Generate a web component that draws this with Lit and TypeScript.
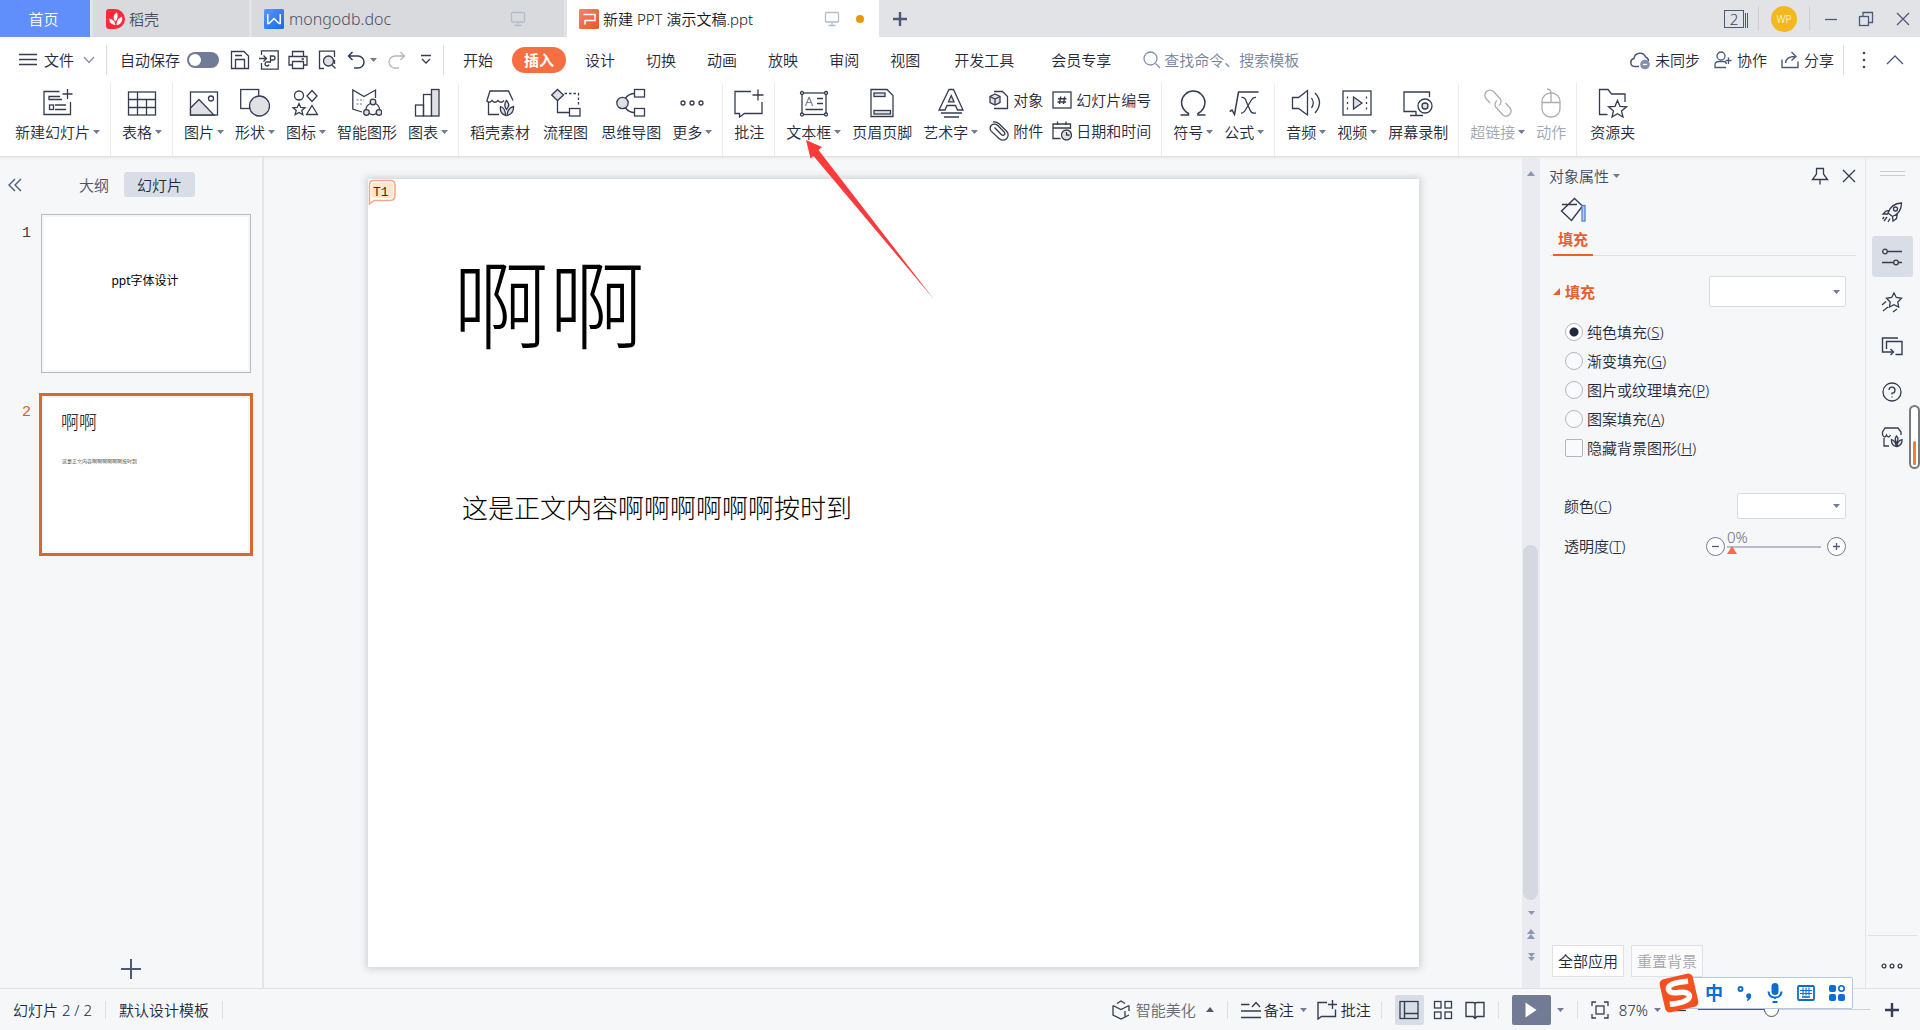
import { LitElement, html, svg, css, nothing } from 'lit';
import type { SVGTemplateResult } from 'lit';
import { customElement } from 'lit/decorators.js';

/* ---------- icon drawings ---------- */

type Drawing = { w: number; h: number; body: SVGTemplateResult };

const DRAWINGS: Record<string, Drawing> = {
  // tab logos
  docer: { w: 20, h: 20, body: svg`<path d="M0 3Q0 0 3 0H9A10 10 0 0 1 9 20H3Q0 20 0 17Z" fill="#fa2a38" stroke="none"/><g fill="#fff" stroke="none"><path d="M9.500 16C5 15.500 3 13 3.400 9.500C7 10.500 9 12.500 9.500 16Z"/><path d="M9.200 12.500C6.500 9 7.500 5.500 10.800 3.200C12.500 7 11.800 10 9.200 12.500Z"/><path d="M10.600 16.200C10.300 12 12.500 9 16 7.500C17 12 15 15.500 10.600 16.200Z"/></g>` },
  writer: { w: 20, h: 20, body: svg`<defs><linearGradient id="wg" x1="0" y1="0" x2="1" y2="1"><stop offset="0" stop-color="#5b97fb"/><stop offset="1" stop-color="#1768ea"/></linearGradient></defs><rect width="20" height="20" rx="1.500" fill="url(#wg)" stroke="none"/><path d="M3.800 5V14.500H5L10 9.500L15 14.500H16.200V5" stroke="#fff" stroke-width="1.500"/>` },
  present: { w: 20, h: 20, body: svg`<defs><linearGradient id="pg" x1="0" y1="0" x2="1" y2="1"><stop offset="0" stop-color="#fb8265"/><stop offset="1" stop-color="#e4582d"/></linearGradient></defs><rect width="20" height="20" rx="1.500" fill="url(#pg)" stroke="none"/><path d="M4.500 5.500H16V11.500H6V15.500" stroke="#fff" stroke-width="1.500"/>` },
  monitor: { w: 16, h: 16, body: svg`<rect x="1.500" y="1.500" width="13" height="9.500" rx="1"/><path d="M8 11V14.500M4.500 14.500H11.500"/>` },
  plus: { w: 16, h: 16, body: svg`<path d="M8 1V15M1 8H15" stroke-width="2.400"/>` },
  plusThin: { w: 20, h: 20, body: svg`<path d="M10 0V20M0 10H20" stroke-width="2"/>` },
  minimize: { w: 14, h: 14, body: svg`<path d="M1 7.500H13"/>` },
  restore: { w: 16, h: 16, body: svg`<rect x="1.500" y="5.500" width="9" height="9"/><path d="M5 5V1.500H14.500V11.500H11"/>` },
  close: { w: 14, h: 14, body: svg`<path d="M1 1L13 13M13 1L1 13"/>` },

  // menu row
  burger: { w: 18, h: 14, body: svg`<path d="M0 1.500H18M0 6.500H18M0 11.500H18"/>` },
  chevDown: { w: 12, h: 8, body: svg`<path d="M1 1L6 6.500L11 1"/>` },
  chevUp: { w: 18, h: 10, body: svg`<path d="M1 9L9 1L17 9"/>` },
  save: { w: 20, h: 20, body: svg`<path d="M1.500 1.500H14L18.500 6V18.500H1.500ZM5.500 18.500V9.500H14.500V18.500M5 5.500H12"/>` },
  exportPdf: { w: 20, h: 20, body: svg`<path d="M2.500 5V.800H19.200V19.200H2.500V13M0 8.500H7M4.500 5.500L7.500 8.500L4.500 11.500"/><path d="M10 14.500A2 2 0 1 1 8.500 12H11.500V6H14A2 2 0 0 1 14 10H11.500"/>` },
  print: { w: 20, h: 20, body: svg`<path d="M4.500 6V1.500H15.500V6M4.500 15H1V6.500H19V15H15.500M4.500 11.500H15.500V18.500H4.500ZM13.500 9H16"/>` },
  preview: { w: 20, h: 20, body: svg`<path d="M7 18.500H2.500V1.200H17.500V7M17.500 14V10"/><circle class="f" cx="11.500" cy="11" r="5"/><path d="M15 15L18.500 18.500"/>` },
  undo: { w: 18, h: 18, body: svg`<path d="M5.500 1L1.500 5L5.500 9M1.500 5H11A6 6 0 0 1 11 17H7" stroke-width="1.500"/>` },
  redo: { w: 18, h: 18, body: svg`<path d="M12.500 1L16.500 5L12.500 9M16.500 5H7A6 6 0 0 0 7 17H11"/>` },
  more: { w: 12, h: 12, body: svg`<path d="M1 1.500H11M2 5L6 9L10 5"/>` },
  search: { w: 18, h: 18, body: svg`<circle cx="7.500" cy="7.500" r="6.500"/><path d="M12.500 12.500L17 17"/>` },
  cloud: { w: 20, h: 20, body: svg`<path d="M9 16.500H4.500A4 4 0 0 1 4 8.600A6 6 0 0 1 15.500 7A4.500 4.500 0 0 1 18.500 11" stroke-width="1.500"/><circle cx="15" cy="14.500" r="4.800" fill="#7f8fb0" stroke="none"/><path d="M12.800 14.500H17.200" stroke="#fff"/>` },
  collab: { w: 18, h: 18, body: svg`<circle cx="7" cy="5" r="4"/><path d="M12 16.500H1V14Q1 10.500 5 10.500H9.500Q12 10.500 12.500 13M14.500 6.500V13M11.500 9.500H17.500"/>` },
  share: { w: 18, h: 18, body: svg`<path d="M1 8.500V16.500H17V10.500M4.500 12Q5 5.500 14 5.500M10.500 1L15 5.500L10.500 9.500" stroke-width="1.400"/>` },
  dots: { w: 4, h: 18, body: svg`<g fill="#3b455c" stroke="none"><circle cx="2" cy="2" r="1.300"/><circle cx="2" cy="9" r="1.300"/><circle cx="2" cy="16" r="1.300"/></g>` },

  // ribbon
  newSlide: { w: 30, h: 30, body: svg`<path d="M16.500 3.500H1V26.500H27.500V14M24.500 1V11M19.500 6H29.500"/><path d="M17 8.500H6V11.500H19M12 17H23M12 21.500H23"/><rect x="6.500" y="17" width="4" height="4.500"/>` },
  table: { w: 30, h: 30, body: svg`<rect x="1.500" y="4" width="27" height="23"/><path d="M1.500 11.500H28.500M1.500 19.500H28.500M10.500 4V27M19.500 11.500V27"/>` },
  picture: { w: 30, h: 30, body: svg`<rect x="1.500" y="4" width="27" height="23"/><path class="f" d="M1.500 20L10 11.500L25 27H1.500Z"/><circle cx="22" cy="10.500" r="2.500"/>` },
  shapes: { w: 30, h: 30, body: svg`<rect x=".700" y="1.500" width="18" height="19"/><circle class="f" cx="19.500" cy="18" r="10"/>` },
  icons: { w: 30, h: 30, body: svg`<circle cx="8" cy="7.500" r="4.500"/><path d="M21 2.500L26 8L21 13.500L16 8ZM21 17.500L26.500 26.500H15.500Z"/><path d="M8 15.500L9.800 19.400L14 19.800L10.800 22.500L11.800 26.700L8 24.500L4.200 26.700L5.200 22.500L2 19.800L6.200 19.400Z"/>` },
  smart: { w: 30, h: 30, body: svg`<path d="M10 24L.800 21V2L12 8.500L23.500 2V10M12 8.500"/><path d="M4.500 12H12M4.500 16H10" stroke-dasharray="2 1.500" stroke="#9aa0ad"/><circle class="f" cx="21" cy="14" r="2.800"/><circle class="f" cx="14.500" cy="24.500" r="2.800"/><circle class="f" cx="27" cy="24.500" r="2.800"/><path d="M18.500 15.500Q14 17.500 14 21.700M23.500 15.500Q27.500 17.500 27.500 21.700M17.500 25.500Q21 28 24.200 25.500"/>` },
  chart: { w: 30, h: 30, body: svg`<rect x="2.500" y="17" width="8" height="11"/><rect x="10.500" y="6.500" width="8" height="21.500"/><rect class="f" x="18.500" y="1.500" width="7.500" height="26.500"/>` },
  store: { w: 30, h: 30, body: svg`<path d="M2 12.500L5 3H23.500L28 12.500M1.500 12.500Q4 16 7 12.500Q10 16 13 12.500Q16 16 19 12.500M3.500 14.500V26.500H14"/><path class="f" d="M21.500 12.500Q26 17 21.500 21.500Q18 17 21.500 12.500ZM15.500 18.500Q20.500 20 20.500 27.500Q14.500 25.500 15.500 18.500ZM28.500 18.500Q29 25.500 22 27.500Q22.500 20 28.500 18.500Z"/>` },
  flow: { w: 30, h: 30, body: svg`<path class="f" d="M6.500 1.500L12.500 7L6.500 12.500L.700 7Z"/><path d="M13.500 5.500H27.500V18" stroke-dasharray="2.500 2"/><path d="M6.500 12.500V24.500H18.500"/><rect x="18.500" y="20.500" width="10.500" height="7.500"/>` },
  mind: { w: 30, h: 30, body: svg`<circle class="f" cx="6.500" cy="15" r="5.700"/><path d="M9.500 10Q13 5.500 18.500 5.500M9.500 20Q13 24.500 18.500 24.500"/><rect x="18.500" y="1.500" width="10" height="7.500"/><rect x="18.500" y="20.500" width="10" height="7.500"/>` },
  dotsRow: { w: 30, h: 30, body: svg`<circle cx="6" cy="15" r="2"/><circle cx="15" cy="15" r="2"/><circle cx="24" cy="15" r="2"/>` },
  comment: { w: 30, h: 30, body: svg`<path d="M17 3.500H1V25.500H5.500V29L10.500 25.500H28V14M24 1.500V12.500M18.500 7H29.500"/>` },
  textbox: { w: 30, h: 30, body: svg`<rect x="3" y="5" width="24" height="21.500"/><g fill="#fff"><circle cx="3" cy="5" r="1.500"/><circle cx="27" cy="5" r="1.500"/><circle cx="3" cy="26.500" r="1.500"/><circle cx="27" cy="26.500" r="1.500"/></g><path d="M18 10.500H24M18 15.500H24M6.500 21.500H24"/><text x="6" y="17.500" font-size="13" fill="#2b3245" stroke="none">A</text>` },
  header: { w: 30, h: 30, body: svg`<path d="M4 1.500H20L26 7.500V28.500H4Z"/><rect class="f" x="7" y="5" width="11" height="3.500"/><rect class="f" x="7" y="22.500" width="16.500" height="3.500"/>` },
  wordart: { w: 30, h: 30, body: svg`<path d="M13 1.500H17.500L27 22H21.500L19.500 17.500H11L9 22H3Z"/><path class="f" d="M15.200 7.500L18 13.800H12.500Z"/><path d="M5 25H26M8 29H23"/>` },
  object: { w: 20, h: 20, body: svg`<path d="M5 1.500H13.500L18.500 6.500V18.500H5"/><path class="f" d="M6 4L11 6.500V12.500L6 15L1 12.500V6.500Z"/><path d="M1 6.500L6 9L11 6.500M6 9V15"/>` },
  clip: { w: 20, h: 20, body: svg`<path d="M5.500 6.500L12.500 13.800A1.900 1.900 0 0 0 15.200 11L8.500 4.300A4.300 4.300 0 0 0 2.400 10.400L10 17.500A5.200 5.200 0 0 0 17.700 10.200L10 2.800Q7.500 .500 4 1"/>` },
  slideNo: { w: 20, h: 20, body: svg`<rect x="1" y="2" width="18" height="16"/><path d="M8.700 6.500L7.500 14M12.700 6.500L11.500 14M6 8.800H14.500M5.500 12H14" stroke-width="1.400"/>` },
  date: { w: 20, h: 20, body: svg`<path d="M8.500 17.500H1V3H18.500V8M1 7H18.500M5.500 .500V4M14 .500V4"/><circle class="f" cx="14.500" cy="14" r="5"/><path d="M14.500 11V14H17.500"/>` },
  omega: { w: 30, h: 30, body: svg`<path d="M2.500 27H10.500V25.500Q3.500 21.500 3.500 14A11.800 12 0 0 1 27 14Q27 21.500 20 25.500V27H27.500" stroke-width="1.500"/>` },
  formula: { w: 30, h: 30, body: svg`<path d="M.700 23.500L3 22L5.500 26.500L9.500 4H29.500" stroke-width="1.500"/><path d="M12.500 9.500Q16 9 17.500 14L21 22Q22.500 26 27 25M27 9.500Q24 9 21.500 13.500L17 21Q14.500 25.500 12 25"/>` },
  audio: { w: 30, h: 30, body: svg`<path d="M1.500 9.500H7.500L16.500 2.500V27L7.500 20.500H1.500Z"/><path d="M20.500 10Q24 15 20.500 20M24 5Q33 14.500 24 25"/>` },
  video: { w: 30, h: 30, body: svg`<rect x="1" y="3" width="28" height="24"/><path class="f" d="M11.500 9L20 15L11.500 21Z"/><path d="M5.500 8.500V22M24.500 8.500V22" stroke-dasharray="2 3.500"/>` },
  record: { w: 30, h: 30, body: svg`<path d="M13.500 23.500H1V4H26.500V9M13 23.500V27.500M7 27.500H20"/><circle cx="22" cy="18" r="7"/><circle class="f" cx="22" cy="18" r="3"/>` },
  link: { w: 30, h: 30, body: svg`<path d="M7 15L3.500 11A5 5 0 0 1 10.500 3.500L17 10.500A5 5 0 0 1 16 17.500M22.500 15L27 20A5 5 0 0 1 20 27L13.500 20A5 5 0 0 1 14 12.500"/>` },
  mouse: { w: 30, h: 30, body: svg`<rect x="6" y="5" width="18" height="24" rx="8.500"/><path d="M6 14.500H24M15 14.500V5Q15 1.500 11 1"/>` },
  folder: { w: 30, h: 30, body: svg`<path d="M9.500 26.500H1.500V1.500H10L13.500 6H27V14"/><path d="M19.500 12.500L22 18.300L28.500 18.800L23.500 23L25 29L19.500 25.700L14 29L15.500 23L10.500 18.800L17 18.300Z"/>` },

  // side areas
  collapse: { w: 14, h: 14, body: svg`<path d="M7 1L1 7L7 13M13 1L7 7L13 13" stroke-width="1.400"/>` },
  pin: { w: 18, h: 18, body: svg`<path d="M5 1.500H13M5.500 1.500V7L1.500 12.500H16.500L12.500 7V1.500M9 12.500V17.500"/>` },
  bucket: { w: 26, h: 26, body: svg`<path d="M14.500 1.500L22.500 9L11.500 23.500L1.500 14ZM2 7.500H17" stroke-width="1.400"/><rect x="22" y="8.500" width="3" height="15.500" fill="#bdd0f4" stroke="#5280d8"/>` },
  rocket: { w: 22, h: 22, body: svg`<path d="M7 12Q10 2.500 20.500 2Q20.500 12 11.500 15.500ZM8.500 9.500L5 10L2 13L7 13M11.500 15.500L12 20L15.500 17.500L16.500 12M6 16L3 20M9 17.500L7 21M3 16L1.500 18"/><circle cx="14.500" cy="8" r="2"/>` },
  sliders: { w: 22, h: 22, body: svg`<circle cx="4" cy="5.500" r="2.300"/><path d="M6.500 5.500H21M1 16.500H12.500M17.500 16.500H21"/><circle cx="15" cy="16.500" r="2.300"/>` },
  starFly: { w: 22, h: 22, body: svg`<path d="M13 2L15.300 6.500L20.500 7.300L16.800 11L17.600 16L13 13.700L8.400 16L9.200 11L5.500 7.300L10.700 6.500ZM1 14L5 10.500M2 20L7 16M12 21L16 18"/>` },
  switchPane: { w: 22, h: 22, body: svg`<path d="M11.500 16H1.500V2H17M5.500 13V5.500H21V18.500H14.500M9.500 13L12.500 16L9.500 19" stroke-width="1.400"/>` },
  help: { w: 22, h: 22, body: svg`<circle cx="11" cy="11" r="9"/><path d="M8 9A3 3 0 1 1 11 12.200V13.500M11 15.500V16.500"/>` },
  storeSmall: { w: 22, h: 22, body: svg`<path d="M1.500 9V6L4 2H17L20 6V9M1.500 9Q4 13 5.500 9Q7.500 13 9.500 9M3 12V20H8"/><path class="f" d="M15.500 10Q18.500 13 15.500 17Q13 13 15.500 10ZM10.500 13.500Q15 15 15 20.500Q10 19 10.500 13.500ZM21 13.500Q21.500 19 16 20.500Q16 15 21 13.500Z"/>` },
  dots3: { w: 22, h: 8, body: svg`<circle cx="3" cy="4" r="1.900"/><circle cx="11" cy="4" r="1.900"/><circle cx="19" cy="4" r="1.900"/>` },

  // status bar
  beautify: { w: 18, h: 20, body: svg`<path d="M5 3.500L9 1L13 3.500M1 5.500L9 9.500L17 5.500M1 5.500V15L9 19L17 15M17 5.500V11M13 11V17"/>` },
  notes: { w: 20, h: 18, body: svg`<path d="M0 3.500H8.500M0 10H20M0 16.500H20M11 6L15 1.500L19 6" stroke-width="1.400"/>` },
  commentSmall: { w: 20, h: 20, body: svg`<path d="M10 2.500H1V19L4.500 16.500H18.500V9.500M15.500 0V9M11 4.500H20" stroke-width="1.400"/>` },
  viewNormal: { w: 20, h: 20, body: svg`<rect x="1" y="1.500" width="18" height="17"/><path d="M5.500 1.500V18.500M5.500 13.500H19" stroke-width="1.400"/>` },
  viewGrid: { w: 20, h: 20, body: svg`<rect x="1.500" y="1.500" width="6.500" height="6.500"/><rect x="12" y="1.500" width="6.500" height="6.500"/><rect x="1.500" y="12" width="6.500" height="6.500"/><rect x="12" y="12" width="6.500" height="6.500"/>` },
  viewRead: { w: 20, h: 20, body: svg`<path d="M10 18.500L8 16.500H1V2.500H8Q10 2.500 10 4Q10 2.500 12 2.500H19V16.500H12ZM10 4V17" stroke-width="1.400"/>` },
  play: { w: 12, h: 16, body: svg`<path d="M.500 .500L11.500 8L.500 15.500Z" fill="#fff" stroke="none"/>` },
  fit: { w: 18, h: 18, body: svg`<path d="M1 5V1H5M13 1H17V5M17 13V17H13M5 17H1V13"/><rect x="5" y="5" width="8" height="8"/>` },

  // input-method bar
  sogou: { w: 42, h: 42, body: svg`<g transform="rotate(-13 21 21)"><rect x="4" y="4" width="34" height="34" rx="5" fill="#f4511e" stroke="none"/><path d="M32.500 11.500Q12 8.500 11.500 15Q11.500 19.500 21 20.500Q31 21.500 30.500 26.500Q29 32.500 9.500 30" stroke="#fff" stroke-width="5.500"/></g>` },
  punct: { w: 16, h: 16, body: svg`<circle cx="3.500" cy="4" r="2" stroke-width="2"/><path d="M12 13A2 2 0 1 1 13.500 10Q14 13.500 10 15.500" fill="#0a6cd6" stroke="#0a6cd6"/>` },
  mic: { w: 16, h: 20, body: svg`<rect x="4.500" y="0" width="7" height="12" rx="3.500" fill="#0a6cd6" stroke="none"/><path d="M1.500 8.500Q2 14.500 8 14.500Q14 14.500 14.500 8.500M8 14.500V16M5.500 19H10.500" stroke-width="2"/>` },
  keyboard: { w: 18, h: 16, body: svg`<rect x="1" y="1" width="16" height="14" rx="1" stroke-width="1.800"/><path d="M3 5.500H15M3 8.500H15M6 2.500V10.500M9 2.500V10.500M12 2.500V10.500" stroke-width="1.100"/><path d="M5 12H13" stroke-width="1.600"/>` },
  apps: { w: 16, h: 16, body: svg`<g fill="#0a6cd6" stroke="none"><rect width="7" height="7" rx="2"/><rect y="9" width="7" height="7" rx="2"/><rect x="9" y="9" width="7" height="7" rx="2"/></g><circle cx="12.500" cy="3.500" r="2.700" stroke-width="1.600"/>` },
};

const icon = (name: string) => {
  const d = DRAWINGS[name];
  return html`<svg class="ic" width=${d.w} height=${d.h} viewBox="0 0 ${d.w} ${d.h}" aria-hidden="true">${d.body}</svg>`;
};

const caret = html`<svg class="caret" width="7" height="4" viewBox="0 0 7 4" aria-hidden="true"><path d="M0 0H7L3.500 4Z" /></svg>`;
const caretUp = html`<svg class="caret" width="8" height="5" viewBox="0 0 8 5" aria-hidden="true"><path d="M0 5H8L4 0Z" /></svg>`;

/* ---------- data ---------- */

interface Tool {
  icon: string;
  label: string;
  menu?: boolean;
  off?: boolean;
}

const t = (i: string, label: string, menu = false, off = false): Tool => ({ icon: i, label, menu, off });

const GROUPS: (Tool | Tool[])[][] = [
  [t('newSlide', '新建幻灯片', true)],
  [t('table', '表格', true)],
  [t('picture', '图片', true), t('shapes', '形状', true), t('icons', '图标', true), t('smart', '智能图形'), t('chart', '图表', true)],
  [t('store', '稻壳素材'), t('flow', '流程图'), t('mind', '思维导图'), t('dotsRow', '更多', true)],
  [t('comment', '批注')],
  [
    t('textbox', '文本框', true),
    t('header', '页眉页脚'),
    t('wordart', '艺术字', true),
    [t('object', '对象'), t('clip', '附件')],
    [t('slideNo', '幻灯片编号'), t('date', '日期和时间')],
  ],
  [t('omega', '符号', true), t('formula', '公式', true)],
  [t('audio', '音频', true), t('video', '视频', true), t('record', '屏幕录制')],
  [t('link', '超链接', true, true), t('mouse', '动作', false, true)],
  [t('folder', '资源夹')],
];

const MENUS = ['开始', '插入', '设计', '切换', '动画', '放映', '审阅', '视图', '开发工具', '会员专享'];

const FILLS: [string, string][] = [
  ['纯色填充', 'S'],
  ['渐变填充', 'G'],
  ['图片或纹理填充', 'P'],
  ['图案填充', 'A'],
];

const RAIL = ['rocket', 'sliders', 'starFly', 'switchPane', 'help', 'storeSmall'];
const RAIL_NAMES = ['快速工具', '对象属性', '动画窗格', '切换窗格', '帮助', '素材'];

/* ---------- shared styles ---------- */

const base = css`
  :host {
    display: block;
    box-sizing: border-box;
    color: #23293c;
    font: 350 15px/20px 'Noto Sans', 'Noto Sans CJK SC', sans-serif;
  }
  *,
  *::before {
    box-sizing: border-box;
  }
  button {
    margin: 0;
    padding: 0;
    border: 0;
    background: none;
    color: inherit;
    font: inherit;
    display: inline-flex;
    align-items: center;
    justify-content: center;
    white-space: nowrap;
  }
  .ic {
    display: block;
    flex: none;
    fill: none;
    stroke: #353c50;
    stroke-width: 1.3;
  }
  .ic .f {
    fill: #dfe1e6;
  }
  .caret {
    display: block;
    flex: none;
    fill: #717b95;
  }
  .rule {
    flex: none;
    width: 1px;
    background: #dcdee3;
  }
`;

/* ---------- title bar ---------- */

@customElement('title-bar')
export class TitleBar extends LitElement {
  static styles = [
    base,
    css`
      :host {
        display: flex;
        height: 37px;
        background: #e2e3e7;
        color: #4a5060;
      }
      .tabs {
        display: flex;
        gap: 3px;
      }
      .tab {
        gap: 4px;
        background: #d9dadd;
        justify-content: flex-start;
      }
      .home {
        width: 90px;
        padding-right: 3px;
        justify-content: center;
        background: #608efb;
        color: #fff;
      }
      .docer {
        width: 156px;
        padding-left: 13px;
      }
      .docer span {
        margin-left: -1px;
      }
      .doc {
        width: 312px;
        padding: 0 38px 0 12px;
        gap: 5px;
        font-size: 16px;
      }
      .doc .name {
        flex: 1;
        text-align: left;
      }
      .doc .ic:last-of-type,
      .ppt .screen .ic {
        stroke: #b3bccd;
      }
      .ppt {
        width: 312px;
        padding: 0 15px 0 12px;
        background: #fff;
        color: #16181f;
      }
      .ppt .name {
        flex: 1;
        text-align: left;
      }
      .dot {
        width: 8px;
        height: 8px;
        margin-left: 12px;
        border-radius: 50%;
        background: #e69a08;
      }
      .add {
        width: 42px;
      }
      .add .ic {
        stroke: #4d5978;
      }
      .win {
        display: flex;
        align-items: center;
        margin-left: auto;
        padding-right: 10px;
      }
      .win .ic {
        stroke: #4d5978;
      }
      .win .rule {
        height: 25px;
        background: #cdcfd5;
      }
      .count {
        width: 20px;
        height: 18px;
        border: 1px solid #4d5978;
        line-height: 16px;
        color: #3b455c;
      }
      .stack {
        display: flex;
        gap: 1px;
        align-items: flex-end;
        margin-right: 10px;
      }
      .stack i {
        width: 1px;
        height: 15px;
        background: #4d5978;
      }
      .avatar {
        width: 26px;
        height: 26px;
        margin: 0 12px;
        border-radius: 50%;
        background: #f3b81e;
        color: #fff;
        font-size: 10px;
      }
      .min {
        margin-left: 14px;
      }
      .res {
        margin: 0 22px 0 20px;
      }
    `,
  ];

  render() {
    return html`
      <nav class="tabs">
        <button class="tab home">首页</button>
        <button class="tab docer">${icon('docer')}<span>稻壳</span></button>
        <button class="tab doc">${icon('writer')}<span class="name">mongodb.doc</span>${icon('monitor')}</button>
        <button class="tab ppt">
          ${icon('present')}<span class="name">新建 PPT 演示文稿.ppt</span>
          <span class="screen">${icon('monitor')}</span><span class="dot"></span>
        </button>
      </nav>
      <button class="add" aria-label="新建标签">${icon('plus')}</button>
      <div class="win">
        <div class="stack"><button class="count">2</button><i></i><i></i></div>
        <span class="rule"></span>
        <button class="avatar">WP</button>
        <span class="rule"></span>
        <button class="min" aria-label="最小化">${icon('minimize')}</button>
        <button class="res" aria-label="还原">${icon('restore')}</button>
        <button aria-label="关闭">${icon('close')}</button>
      </div>
    `;
  }
}

/* ---------- menu row ---------- */

@customElement('menu-row')
export class MenuRow extends LitElement {
  static styles = [
    base,
    css`
      :host {
        display: flex;
        align-items: center;
        height: 46px;
        padding: 0 16px 0 19px;
        background: #fff;
      }
      .rule {
        height: 30px;
      }
      .file {
        gap: 7px;
        margin-right: 11px;
      }
      .file .ic:last-child {
        margin-left: 2px;
        stroke: #8a90a0;
      }
      .auto {
        display: flex;
        align-items: center;
        gap: 7px;
        margin-left: 13px;
      }
      .toggle {
        appearance: none;
        width: 32px;
        height: 16px;
        margin: 0;
        border-radius: 8px;
        background: #717b95;
        display: flex;
        align-items: center;
        padding: 2px;
      }
      .toggle::before {
        content: '';
        width: 12px;
        height: 12px;
        border-radius: 50%;
        background: #fff;
      }
      .quick {
        display: flex;
        align-items: center;
        gap: 9px;
        margin: 0 11px;
      }
      .undo {
        gap: 5px;
        margin-left: 1px;
      }
      .redo {
        margin: 0 5px 0 2px;
      }
      .redo .ic {
        stroke: #b4b7be;
      }
      .menus {
        display: flex;
        gap: 7px;
        margin-left: 7px;
      }
      .menu {
        height: 26px;
        padding: 0 12px;
        border-radius: 13px;
      }
      .wide {
        padding: 0 15px;
      }
      .on {
        background: #f66f43;
        color: #fff;
        font-weight: 700;
      }
      .search {
        display: flex;
        align-items: center;
        gap: 3px;
        flex: 0 1 220px;
        margin-left: 17px;
      }
      .search .ic {
        stroke: #8390ae;
      }
      .search input {
        flex: 1;
        min-width: 0;
        padding: 0;
        border: 0;
        outline: 0;
        background: none;
        font: inherit;
      }
      .search input::placeholder {
        color: #76809a;
      }
      .right {
        display: flex;
        align-items: center;
        gap: 14px;
        margin-left: auto;
      }
      .right button {
        gap: 5px;
      }
      .right .ic {
        stroke: #4d5978;
      }
      .right .rule {
        margin: 0 4px 0 -5px;
      }
      .up {
        margin-left: 6px;
      }
    `,
  ];

  render() {
    return html`
      <button class="file">${icon('burger')}<span>文件</span>${icon('chevDown')}</button>
      <span class="rule"></span>
      <label class="auto">自动保存<input class="toggle" type="checkbox" role="switch" /></label>
      <div class="quick">
        <button aria-label="保存">${icon('save')}</button>
        <button aria-label="输出为PDF">${icon('exportPdf')}</button>
        <button aria-label="打印">${icon('print')}</button>
        <button aria-label="打印预览">${icon('preview')}</button>
        <button class="undo" aria-label="撤销">${icon('undo')}${caret}</button>
        <button class="redo" aria-label="恢复">${icon('redo')}</button>
        <button aria-label="自定义快速访问工具栏">${icon('more')}</button>
      </div>
      <span class="rule"></span>
      <nav class="menus">
        ${MENUS.map((m) => html`<button class="menu ${m.length > 2 ? 'wide' : ''} ${m === '插入' ? 'on' : ''}">${m}</button>`)}
      </nav>
      <label class="search">${icon('search')}<input aria-label="查找命令" placeholder="查找命令、搜索模板" /></label>
      <div class="right">
        <button>${icon('cloud')}未同步</button>
        <button>${icon('collab')}协作</button>
        <button>${icon('share')}分享</button>
        <span class="rule"></span>
        <button aria-label="更多">${icon('dots')}</button>
        <button class="up" aria-label="收起功能区">${icon('chevUp')}</button>
      </div>
    `;
  }
}

/* ---------- ribbon ---------- */

@customElement('tool-ribbon')
export class ToolRibbon extends LitElement {
  static styles = [
    base,
    css`
      :host {
        display: flex;
        height: 74px;
        padding-left: 4px;
        background: #fff;
        border-bottom: 1px solid #dfe1e5;
        box-shadow: 0 1px 2px rgba(40, 50, 70, 0.08);
      }
      .group {
        display: flex;
        gap: 11px;
        height: 73px;
        padding: 0 10px 0 11px;
        border-right: 1px solid #ebecef;
      }
      .group:last-child {
        border: 0;
      }
      .tool {
        flex-direction: column;
        justify-content: flex-start;
        gap: 4px;
        padding-top: 5px;
        min-width: 30px;
      }
      .tool.mid {
        min-width: 49px;
      }
      .cap {
        display: flex;
        align-items: center;
        gap: 3px;
      }
      .off {
        color: #a3a6ad;
      }
      .off .ic {
        stroke: #a9acb2;
      }
      .pair {
        display: flex;
        flex-direction: column;
        align-items: flex-start;
        gap: 11px;
        padding-top: 7px;
      }
      .pair .row {
        gap: 4px;
      }
      .pair + .pair {
        margin-left: -2px;
      }
    `,
  ];

  private tool(x: Tool) {
    return html`<button class="tool ${x.off ? 'off' : ''} ${x.label.length === 3 && !x.menu ? 'mid' : ''}" ?disabled=${x.off}>
      ${icon(x.icon)}<span class="cap">${x.label}${x.menu ? caret : nothing}</span>
    </button>`;
  }

  render() {
    return GROUPS.map(
      (g) => html`<div class="group">
        ${g.map((x) =>
          Array.isArray(x)
            ? html`<div class="pair">${x.map((y) => html`<button class="row">${icon(y.icon)}${y.label}</button>`)}</div>`
            : this.tool(x),
        )}
      </div>`,
    );
  }
}

/* ---------- slide list ---------- */

@customElement('slide-list')
export class SlideList extends LitElement {
  static styles = [
    base,
    css`
      :host {
        display: flex;
        flex-direction: column;
        width: 264px;
        border-right: 2px solid #e3e5ec;
      }
      .head {
        display: flex;
        align-items: center;
        height: 25px;
        margin: 15px 0 17px;
        padding-left: 8px;
      }
      .head .ic {
        stroke: #4d5978;
      }
      .tab {
        height: 25px;
        padding: 0 13px;
        border-radius: 3px;
        color: #4a5268;
      }
      .outline {
        margin: 0 2px 0 44px;
      }
      .on {
        background: #d9dee6;
        color: #23293c;
      }
      .item {
        display: grid;
        grid-template-columns: 39px 214px;
        align-items: start;
        margin-bottom: 20px;
        font-family: 'Liberation Serif', 'Noto Sans CJK SC', serif;
      }
      .no {
        padding: 10px 8px 0 0;
        font: 15px/20px 'Liberation Mono', monospace;
        text-align: right;
        color: #3a3f4c;
      }
      .item.sel .no {
        color: #d8621a;
      }
      .thumb {
        display: flex;
        flex-direction: column;
        align-items: stretch;
        justify-content: flex-start;
        width: 210px;
        aspect-ratio: 210 / 159;
        margin-left: 2px;
        border: 1px solid #b9babc;
        background: #fff;
        box-shadow: inset 0 0 0 2px #f6f7f9;
        color: #000;
        text-align: left;
      }
      .item.sel .thumb {
        width: 214px;
        aspect-ratio: 214 / 163;
        margin-left: 0;
        border: 3px solid #d46b2a;
      }
      .cover {
        padding: 56px 2px 0 0;
        text-align: center;
        font: 400 12px/20px 'Noto Sans', 'Noto Sans CJK SC', sans-serif;
      }
      .t {
        padding: 15px 0 0 19px;
        font-size: 18px;
        font-weight: 300;
        line-height: 24px;
      }
      .b {
        padding: 23px 0 0 20px;
        font-size: 5px;
        font-weight: 300;
        line-height: 8px;
      }
      .add {
        margin: auto auto 9px;
        width: 24px;
        height: 20px;
      }
      .add .ic {
        stroke: #4d5978;
      }
    `,
  ];

  render() {
    return html`
      <div class="head">
        <button aria-label="收起">${icon('collapse')}</button>
        <button class="tab outline">大纲</button>
        <button class="tab on">幻灯片</button>
      </div>
      <div class="item">
        <span class="no">1</span>
        <button class="thumb"><div class="cover">ppt字体设计</div></button>
      </div>
      <div class="item sel">
        <span class="no">2</span>
        <button class="thumb">
          <div class="t">啊啊</div>
          <div class="b">这是正文内容啊啊啊啊啊啊按时到</div>
        </button>
      </div>
      <button class="add" aria-label="新建幻灯片">${icon('plusThin')}</button>
    `;
  }
}

/* ---------- slide canvas ---------- */

@customElement('slide-stage')
export class SlideStage extends LitElement {
  static styles = [
    base,
    css`
      :host {
        display: flex;
        min-width: 0;
      }
      .area {
        flex: 1;
        display: flex;
        min-width: 0;
        padding: 22px 103px 21px 104px;
      }
      .slide {
        position: relative;
        flex: 1;
        min-width: 0;
        padding: 72px 85px;
        background: #fff;
        box-shadow: 0 0 7px 2px rgba(60, 65, 75, 0.2);
        color: #000;
      }
      .title {
        margin: 0;
        font: 300 96px/116px 'Liberation Serif', 'Noto Sans CJK SC', serif;
      }
      .text {
        margin: 127px 0 0 9px;
        font: 300 26px/32px 'Liberation Serif', 'Noto Sans CJK SC', serif;
      }
      .tag {
        position: absolute;
        left: 0;
        top: 0;
      }
      .tag text {
        font: 13px 'Liberation Mono', monospace;
      }
      .bar {
        display: flex;
        flex-direction: column;
        align-items: center;
        width: 18px;
        padding: 14px 0 27px;
        background: #e9ebf1;
      }
      .bar .caret {
        fill: #8c97b2;
      }
      .track {
        flex: 1;
        align-self: stretch;
        display: flex;
        flex-direction: column;
        justify-content: flex-end;
        padding: 0 2px 0 1px;
        margin-bottom: 11px;
      }
      .grip {
        height: 49%;
        border-radius: 8px;
        background: #d5d8e0;
      }
      .dbl {
        flex-direction: column;
        margin-top: 14px;
      }
    `,
  ];

  render() {
    return html`
      <div class="area">
        <article class="slide">
          <svg class="tag" width="28" height="26" viewBox="0 0 28 26">
            <path d="M6 1.500H22Q27 1.500 27 6V16Q27 21.500 22 21.500H6L1.500 25V6Q1.500 1.500 6 1.500Z" fill="#fff" stroke="#f0a988" stroke-width="1.500" />
            <rect x="3.500" y="3.500" width="21.500" height="15.500" rx="3" fill="#ffe6c6" />
            <text x="5" y="16.500" fill="#4a2c10">T1</text>
          </svg>
          <h1 class="title">啊啊</h1>
          <p class="text">这是正文内容啊啊啊啊啊啊按时到</p>
        </article>
      </div>
      <div class="bar">
        <button aria-label="向上滚动">${caretUp}</button>
        <div class="track"><div class="grip"></div></div>
        <button aria-label="向下滚动">${caret}</button>
        <button class="dbl" aria-label="上一张">${caretUp}${caretUp}</button>
        <button class="dbl" aria-label="下一张">${caret}${caret}</button>
      </div>
    `;
  }
}

/* ---------- property panel ---------- */

@customElement('property-panel')
export class PropertyPanel extends LitElement {
  static styles = [
    base,
    css`
      :host {
        display: flex;
        flex-direction: column;
        width: 326px;
        padding: 9px 19px 11px 9px;
        border-right: 1px solid #e3e5ec;
      }
      .head {
        display: flex;
        align-items: center;
        margin-right: -10px;
      }
      .name {
        gap: 4px;
        margin-right: auto;
        color: #454c5f;
      }
      .pin {
        margin-right: 13px;
      }
      .tabs {
        display: flex;
        margin: 11px -10px 0 1px;
        border-bottom: 1px solid #dfe1e6;
      }
      .fill {
        flex-direction: column;
        gap: 6px;
        width: 40px;
        margin: 0 0 -1px 3px;
        padding-bottom: 5px;
        border-bottom: 2px solid #e8602f;
        color: #e8602f;
        font-weight: 700;
      }
      .section {
        display: flex;
        align-items: center;
        justify-content: space-between;
        margin: 20px 0 10px 4px;
      }
      .fold {
        gap: 5px;
        color: #e8602f;
        font-weight: 700;
      }
      .pick {
        position: relative;
        display: block;
      }
      .pick select {
        appearance: none;
        display: block;
        width: 137px;
        height: 31px;
        border: 1px solid #d9dbe3;
        border-radius: 2px;
        background: #fff;
        font: inherit;
      }
      .pick.small select {
        width: 109px;
        height: 26px;
      }
      .pick .caret {
        position: absolute;
        right: 6px;
        top: calc(50% - 2px);
        pointer-events: none;
      }
      .opt {
        display: flex;
        align-items: center;
        gap: 4px;
        height: 29px;
        padding-left: 16px;
      }
      .opt input {
        appearance: none;
        width: 18px;
        height: 18px;
        margin: 0;
        border: 1px solid #b4b6c0;
        background: #f9fafb;
      }
      .opt input[type='radio'] {
        border-radius: 50%;
      }
      .opt input[type='checkbox'] {
        border-radius: 2px;
      }
      .opt input:checked {
        background: radial-gradient(circle, #23293c 4px, #fff 5px);
      }
      .row {
        display: flex;
        align-items: center;
        justify-content: space-between;
        padding-left: 15px;
      }
      .color {
        margin-top: 31px;
      }
      .alpha {
        margin-top: 5px;
        height: 44px;
      }
      .range {
        display: flex;
        align-items: center;
        gap: 2px;
      }
      .range .round {
        width: 19px;
        height: 19px;
        border: 1px solid #717b95;
        border-radius: 50%;
        background: #fff;
      }
      .range .round .ic {
        stroke: #4d5978;
      }
      .slide {
        position: relative;
        width: 98px;
        height: 19px;
      }
      .slide output {
        position: absolute;
        left: 0;
        top: -9px;
        line-height: 18px;
        color: #666a75;
      }
      .slide input {
        appearance: none;
        display: block;
        width: 94px;
        height: 19px;
        margin: 0;
        background: linear-gradient(#b9bbc5, #b9bbc5) 0 9px / 100% 2px no-repeat;
      }
      .slide input::-webkit-slider-thumb {
        appearance: none;
        width: 10px;
        height: 8px;
        margin-top: 8px;
        background: #f66f43;
        clip-path: polygon(50% 0, 100% 100%, 0 100%);
      }
      .foot {
        display: flex;
        gap: 7px;
        margin-top: auto;
        padding-left: 3px;
      }
      .foot button {
        width: 72px;
        height: 32px;
        border: 1px solid #dfe1e7;
        background: #fff;
      }
      .foot button:disabled {
        color: #a3a6ad;
        background: #fbfbfc;
      }
    `,
  ];

  render() {
    return html`
      <header class="head">
        <button class="name">对象属性${caret}</button>
        <button class="pin" aria-label="固定">${icon('pin')}</button>
        <button aria-label="关闭">${icon('close')}</button>
      </header>
      <div class="tabs"><button class="fill">${icon('bucket')}填充</button></div>
      <div class="section">
        <button class="fold">
          <svg width="7" height="7" viewBox="0 0 7 7"><path d="M7 0V7H0Z" fill="#e8602f" /></svg>填充
        </button>
        <label class="pick"><select aria-label="填充预设"></select>${caret}</label>
      </div>
      ${FILLS.map(
        ([label, key], i) => html`<label class="opt">
          <input type="radio" name="fill" .checked=${i === 0} /><span>${label}(<u>${key}</u>)</span>
        </label>`,
      )}
      <label class="opt"><input type="checkbox" /><span>隐藏背景图形(<u>H</u>)</span></label>
      <div class="row color">
        <label for="color">颜色(<u>C</u>)</label>
        <span class="pick small"><select id="color"></select>${caret}</span>
      </div>
      <div class="row alpha">
        <label for="alpha">透明度(<u>T</u>)</label>
        <div class="range">
          <button class="round" aria-label="减少"><svg class="ic" width="9" height="9" viewBox="0 0 9 9"><path d="M1 4.500H8" /></svg></button>
          <div class="slide"><output>0%</output><input id="alpha" type="range" min="0" max="100" value="0" /></div>
          <button class="round" aria-label="增加"><svg class="ic" width="9" height="9" viewBox="0 0 9 9"><path d="M1 4.500H8M4.500 1V8" /></svg></button>
        </div>
      </div>
      <div class="foot"><button>全部应用</button><button disabled>重置背景</button></div>
    `;
  }
}

/* ---------- icon rail ---------- */

@customElement('side-rail')
export class SideRail extends LitElement {
  static styles = [
    base,
    css`
      :host {
        position: relative;
        display: flex;
        flex-direction: column;
        align-items: center;
        width: 54px;
        padding: 14px 2px 0 0;
      }
      .grip {
        width: 25px;
        height: 5px;
        margin-bottom: 15px;
        border: solid #c9ccd4;
        border-width: 1px 0;
      }
      .item {
        width: 41px;
        height: 41px;
        margin-bottom: 4px;
        border-radius: 3px;
      }
      .on {
        background: #d9dee6;
      }
      .more {
        width: 49px;
        height: 53px;
        margin-top: auto;
        border-top: 1px solid #dfe1e6;
        padding-top: 8px;
      }
      .meter {
        position: absolute;
        right: 0;
        top: 248px;
        display: flex;
        align-items: flex-end;
        width: 11px;
        height: 64px;
        padding: 2px;
        border: 2px solid #777a80;
        border-radius: 6px;
        background: #fff;
      }
      .level {
        width: 100%;
        height: 42%;
        border-radius: 2px;
        background: #f97a2b;
      }
    `,
  ];

  render() {
    return html`
      <span class="grip"></span>
      ${RAIL.map((n, i) => html`<button class="item ${i === 1 ? 'on' : ''}" aria-label=${RAIL_NAMES[i]}>${icon(n)}</button>`)}
      <button class="more" aria-label="更多">${icon('dots3')}</button>
      <div class="meter"><span class="level"></span></div>
    `;
  }
}

/* ---------- status bar ---------- */

@customElement('status-bar')
export class StatusBar extends LitElement {
  static styles = [
    base,
    css`
      :host {
        display: flex;
        align-items: center;
        height: 42px;
        padding: 0 20px 0 13px;
        border-top: 1px solid #e0e2e7;
        background: #f5f7f9;
      }
      .rule {
        height: 18px;
        margin: 0 13px;
      }
      .right {
        display: flex;
        align-items: center;
        margin-left: auto;
      }
      .right button {
        gap: 6px;
      }
      .soft {
        color: #666a72;
      }
      .soft .caret {
        margin-left: 4px;
        fill: #555a66;
      }
      .right .notes {
        gap: 3px;
        margin-right: 10px;
      }
      .notes .caret {
        margin-left: 3px;
      }
      .right .cmt {
        gap: 4px;
      }
      .cmt + .rule {
        margin-left: 10px;
      }
      .view {
        width: 29px;
        height: 30px;
        margin-right: 12px;
      }
      .view.on {
        margin-right: 9px;
        background: #d9dee6;
        border-radius: 2px;
      }
      .tight {
        width: 20px;
      }
      .play {
        width: 39px;
        height: 30px;
        margin-right: 6px;
        border-radius: 2px;
        background: #717b95;
      }
      .pct {
        margin: 0 12px 0 10px;
      }
      .zoom {
        appearance: none;
        width: 172px;
        height: 20px;
        margin: 0 14px 0 11px;
        background: linear-gradient(to right, #4d5978 42%, #cfd2da 42%) 0 9px / 100% 1px no-repeat;
      }
      .zoom::-webkit-slider-thumb {
        appearance: none;
        width: 15px;
        height: 15px;
        border: 1px solid #4a4f5a;
        border-radius: 50%;
        background: #fff;
      }
      .plus .ic {
        stroke: #333d58;
      }
      .view.last {
        margin-right: 0;
      }
    `,
  ];

  render() {
    return html`
      <span>幻灯片 2 / 2</span>
      <span class="rule"></span>
      <span>默认设计模板</span>
      <span class="rule"></span>
      <div class="right">
        <button class="soft">${icon('beautify')}智能美化 ${caretUp}</button>
        <span class="rule"></span>
        <button class="notes">${icon('notes')}备注${caret}</button>
        <button class="cmt">${icon('commentSmall')}批注</button>
        <span class="rule"></span>
        <button class="view on" aria-label="普通视图" aria-pressed="true">${icon('viewNormal')}</button>
        <button class="view tight" aria-label="幻灯片浏览">${icon('viewGrid')}</button>
        <button class="view tight last" aria-label="阅读视图">${icon('viewRead')}</button>
        <span class="rule"></span>
        <button class="play" aria-label="放映">${icon('play')}</button>
        <button aria-label="放映选项">${caret}</button>
        <span class="rule"></span>
        <button aria-label="适应窗口">${icon('fit')}</button>
        <button class="pct">87%${caret}</button>
        <button aria-label="缩小">${icon('minimize')}</button>
        <input class="zoom" type="range" min="0" max="100" value="42" aria-label="缩放" />
        <button class="plus" aria-label="放大">${icon('plus')}</button>
      </div>
    `;
  }
}

/* ---------- input-method bar ---------- */

@customElement('ime-bar')
export class ImeBar extends LitElement {
  static styles = [
    base,
    css`
      :host {
        display: flex;
        align-items: center;
      }
      .logo {
        position: relative;
        margin-right: -22px;
      }
      .keys {
        display: flex;
        align-items: center;
        gap: 14px;
        height: 32px;
        padding: 0 7px 0 26px;
        border: 1px solid #b6c8e4;
        border-radius: 2px;
        background: #fff;
        color: #0a6cd6;
        font-size: 18px;
        font-weight: 700;
      }
      .keys .ic {
        stroke: #0a6cd6;
      }
    `,
  ];

  render() {
    return html`
      <button class="logo" aria-label="输入法">${icon('sogou')}</button>
      <div class="keys">
        <button>中</button>
        <button aria-label="标点">${icon('punct')}</button>
        <button aria-label="语音">${icon('mic')}</button>
        <button aria-label="键盘">${icon('keyboard')}</button>
        <button aria-label="工具箱">${icon('apps')}</button>
      </div>
    `;
  }
}

/* ---------- page ---------- */

@customElement('app-root')
export class AppRoot extends LitElement {
  static styles = [
    base,
    css`
      :host {
        position: relative;
        display: flex;
        flex-direction: column;
        min-height: 100vh;
        overflow: hidden;
        background: #f5f7f9;
      }
      .body {
        flex: 1;
        display: grid;
        grid-template-columns: auto 1fr auto auto;
      }
      .ime {
        position: absolute;
        right: 67px;
        bottom: 16px;
      }
      .arrow {
        position: absolute;
        left: 806px;
        top: 140px;
        pointer-events: none;
      }
    `,
  ];

  render() {
    return html`
      <title-bar></title-bar>
      <menu-row></menu-row>
      <tool-ribbon></tool-ribbon>
      <main class="body">
        <slide-list></slide-list>
        <slide-stage></slide-stage>
        <property-panel></property-panel>
        <side-rail></side-rail>
      </main>
      <status-bar></status-bar>
      <ime-bar class="ime"></ime-bar>
      <svg class="arrow" width="130" height="162" viewBox="0 0 130 162" aria-hidden="true">
        <path d="M0 0L16 7L12.500 10L128.500 160L7.500 16L4.500 18.500Z" fill="#fb3b3b" />
      </svg>
    `;
  }
}
